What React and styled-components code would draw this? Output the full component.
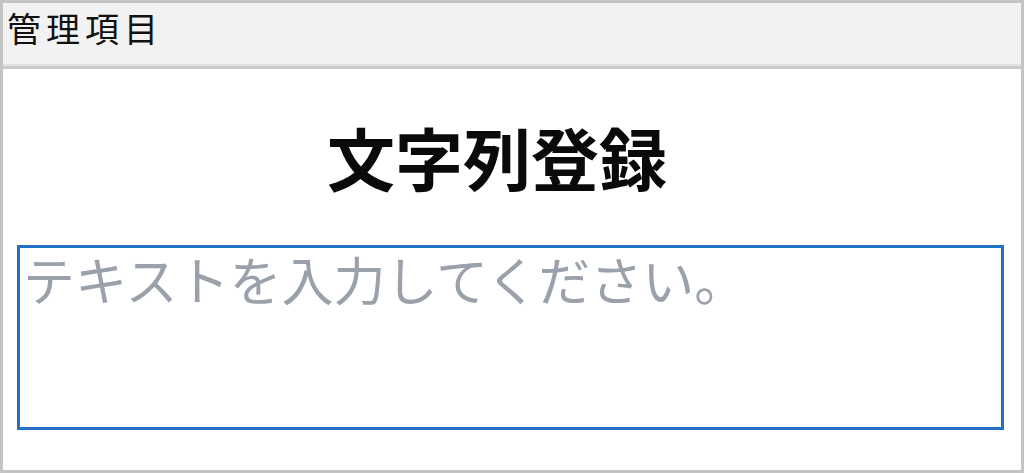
import React from "react";
import styled, { createGlobalStyle } from "styled-components";

const GlobalStyle = createGlobalStyle`
  html, body {
    margin: 0;
    padding: 0;
    background: #ffffff;
  }
  body {
    font-family: "Noto Sans CJK JP", "Noto Sans", sans-serif;
  }
`;

const Panel = styled.div`
  width: 1024px;
  height: 473px;
  box-sizing: border-box;
  border: 3px solid #c4c4c4;
  display: flex;
  flex-direction: column;
  background: #ffffff;
`;

const PanelHeader = styled.div`
  height: 66px;
  flex-shrink: 0;
  box-sizing: border-box;
  background: #f2f2f2;
  border-bottom: 3px solid #c9c9c9;
  box-shadow: inset 0 -2px 0 #e0e0e6;
  display: flex;
  align-items: center;
  padding-left: 4px;
  padding-bottom: 14px;
  font-size: 34px;
  letter-spacing: 5px;
  color: #111;
`;

const PanelBody = styled.div`
  flex: 1;
  display: flex;
  flex-direction: column;
  padding: 0 16px 0 14px;
`;

const Title = styled.h1`
  margin: 54px 0 0;
  padding-right: 28px;
  text-align: center;
  font-size: 68px;
  line-height: 1;
  font-weight: 700;
  color: #0a0a0a;
`;

const TextInput = styled.textarea`
  margin-top: 54px;
  width: 987px;
  height: 185px;
  box-sizing: border-box;
  border: 3px solid #1f72c6;
  padding: 0 3px;
  resize: none;
  outline: none;
  font-family: "Noto Sans CJK JP", "Noto Sans", sans-serif;
  font-size: 52px;
  line-height: 1.2;
  color: #222;

  &::placeholder {
    color: #9aa1ab;
    opacity: 1;
  }
`;

export default function App() {
  return (
    <>
      <GlobalStyle />
      <Panel>
        <PanelHeader>管理項目</PanelHeader>
        <PanelBody>
          <Title>文字列登録</Title>
          <TextInput placeholder="テキストを入力してください。" />
        </PanelBody>
      </Panel>
    </>
  );
}
